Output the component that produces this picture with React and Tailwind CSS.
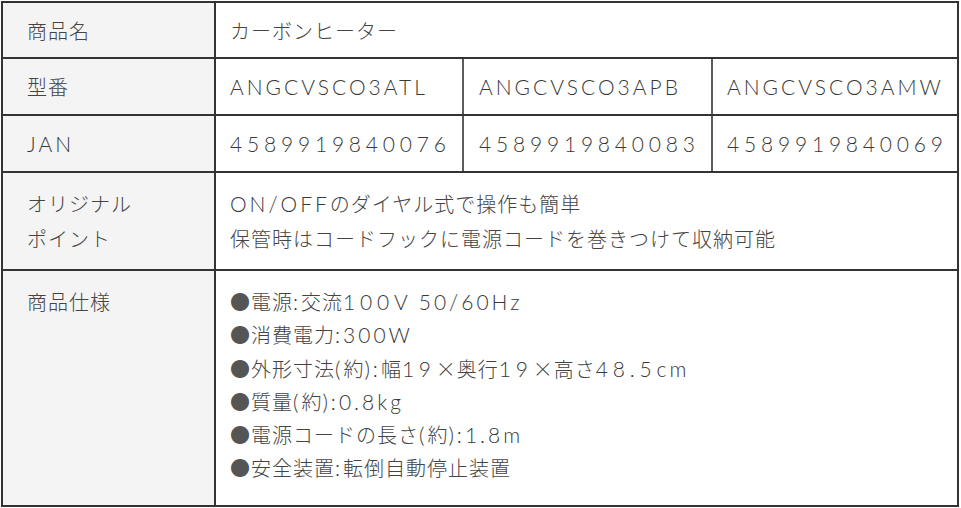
import React from "react";

// digits, other ASCII and Japanese text each get their own tracking
function Txt({ children }) {
  const parts = String(children).match(/[0-9.]+|[\x20-\x7e]+|[^\x20-\x7e]+/g) || [];
  return (
    <>
      {parts.map((p, i) => {
        if (/^[0-9.]+$/.test(p))
          return (
            <span key={i} className="text-[21px] text-[#383838] tracking-[4.8px] font-['Lato',sans-serif] font-light">
              {p}
            </span>
          );
        if (/^[\x20-\x7e]+$/.test(p))
          return (
            <span key={i} className="text-[21px] text-[#383838] tracking-[3px] font-['Lato',sans-serif] font-light">
              {p}
            </span>
          );
        return (
          <span key={i} className="tracking-[1px]">
            {p}
          </span>
        );
      })}
    </>
  );
}

const models = [
  ["ANGCVSCO3ATL", "4589919840076"],
  ["ANGCVSCO3APB", "4589919840083"],
  ["ANGCVSCO3AMW", "4589919840069"],
];

const specs = [
  "電源:交流100V 50/60Hz",
  "消費電力:300W",
  "外形寸法(約):幅19×奥行19×高さ48.5cm",
  "質量(約):0.8kg",
  "電源コードの長さ(約):1.8m",
  "安全装置:転倒自動停止装置",
];

function Label({ children, className = "" }) {
  return (
    <div className={"w-[213px] shrink-0 bg-[#f4f4f4] border-r-2 border-[#333] pl-[24px] " + className}>
      {children}
    </div>
  );
}

function SubCells({ values }) {
  return (
    <div className="flex-1 grid grid-cols-[246px_249px_1fr]">
      <div className="flex items-center pl-[14px]">
        <Txt>{values[0]}</Txt>
      </div>
      <div className="flex items-center pl-[15px] border-l-2 border-[#5c5c5c]">
        <Txt>{values[1]}</Txt>
      </div>
      <div className="flex items-center pl-[14px] border-l-2 border-[#5c5c5c]">
        <Txt>{values[2]}</Txt>
      </div>
    </div>
  );
}

export default function App() {
  return (
    <div className="w-[958px] h-[506px] ml-px mt-px border-2 border-[#333] flex flex-col bg-white text-[#444] text-[20px] font-light leading-[33px] font-['Noto_Sans_CJK_JP','Noto_Sans',sans-serif]">
      <div className="h-[56px] flex border-b-2 border-[#333]">
        <Label className="flex items-center">
          <Txt>商品名</Txt>
        </Label>
        <div className="flex-1 flex items-center pl-[14px]">
          <Txt>カーボンヒーター</Txt>
        </div>
      </div>

      <div className="h-[57px] flex border-b-2 border-[#333]">
        <Label className="flex items-center">
          <Txt>型番</Txt>
        </Label>
        <SubCells values={models.map((m) => m[0])} />
      </div>

      <div className="h-[57px] flex border-b-2 border-[#333]">
        <Label className="flex items-center">
          <Txt>JAN</Txt>
        </Label>
        <SubCells values={models.map((m) => m[1])} />
      </div>

      <div className="h-[98px] flex border-b-2 border-[#333]">
        <Label className="flex flex-col justify-center">
          <div className="h-[35px] leading-[35px]"><Txt>オリジナル</Txt></div>
          <div className="h-[35px] leading-[35px]"><Txt>ポイント</Txt></div>
        </Label>
        <div className="flex-1 flex flex-col justify-center pl-[14px]">
          <div className="h-[35px] leading-[35px]"><Txt>ON/OFFのダイヤル式で操作も簡単</Txt></div>
          <div className="h-[35px] leading-[35px]"><Txt>保管時はコードフックに電源コードを巻きつけて収納可能</Txt></div>
        </div>
      </div>

      <div className="flex-1 flex">
        <Label className="pt-[14px]">
          <div className="h-[33.3px] leading-[33.3px]"><Txt>商品仕様</Txt></div>
        </Label>
        <div className="flex-1 pl-[14px] pt-[14px]">
          {specs.map((s) => (
            <div key={s} className="h-[33.3px] leading-[33.3px] whitespace-nowrap">
              <span className="text-[#555] tracking-[1px]">●</span>
              <Txt>{s}</Txt>
            </div>
          ))}
        </div>
      </div>
    </div>
  );
}
